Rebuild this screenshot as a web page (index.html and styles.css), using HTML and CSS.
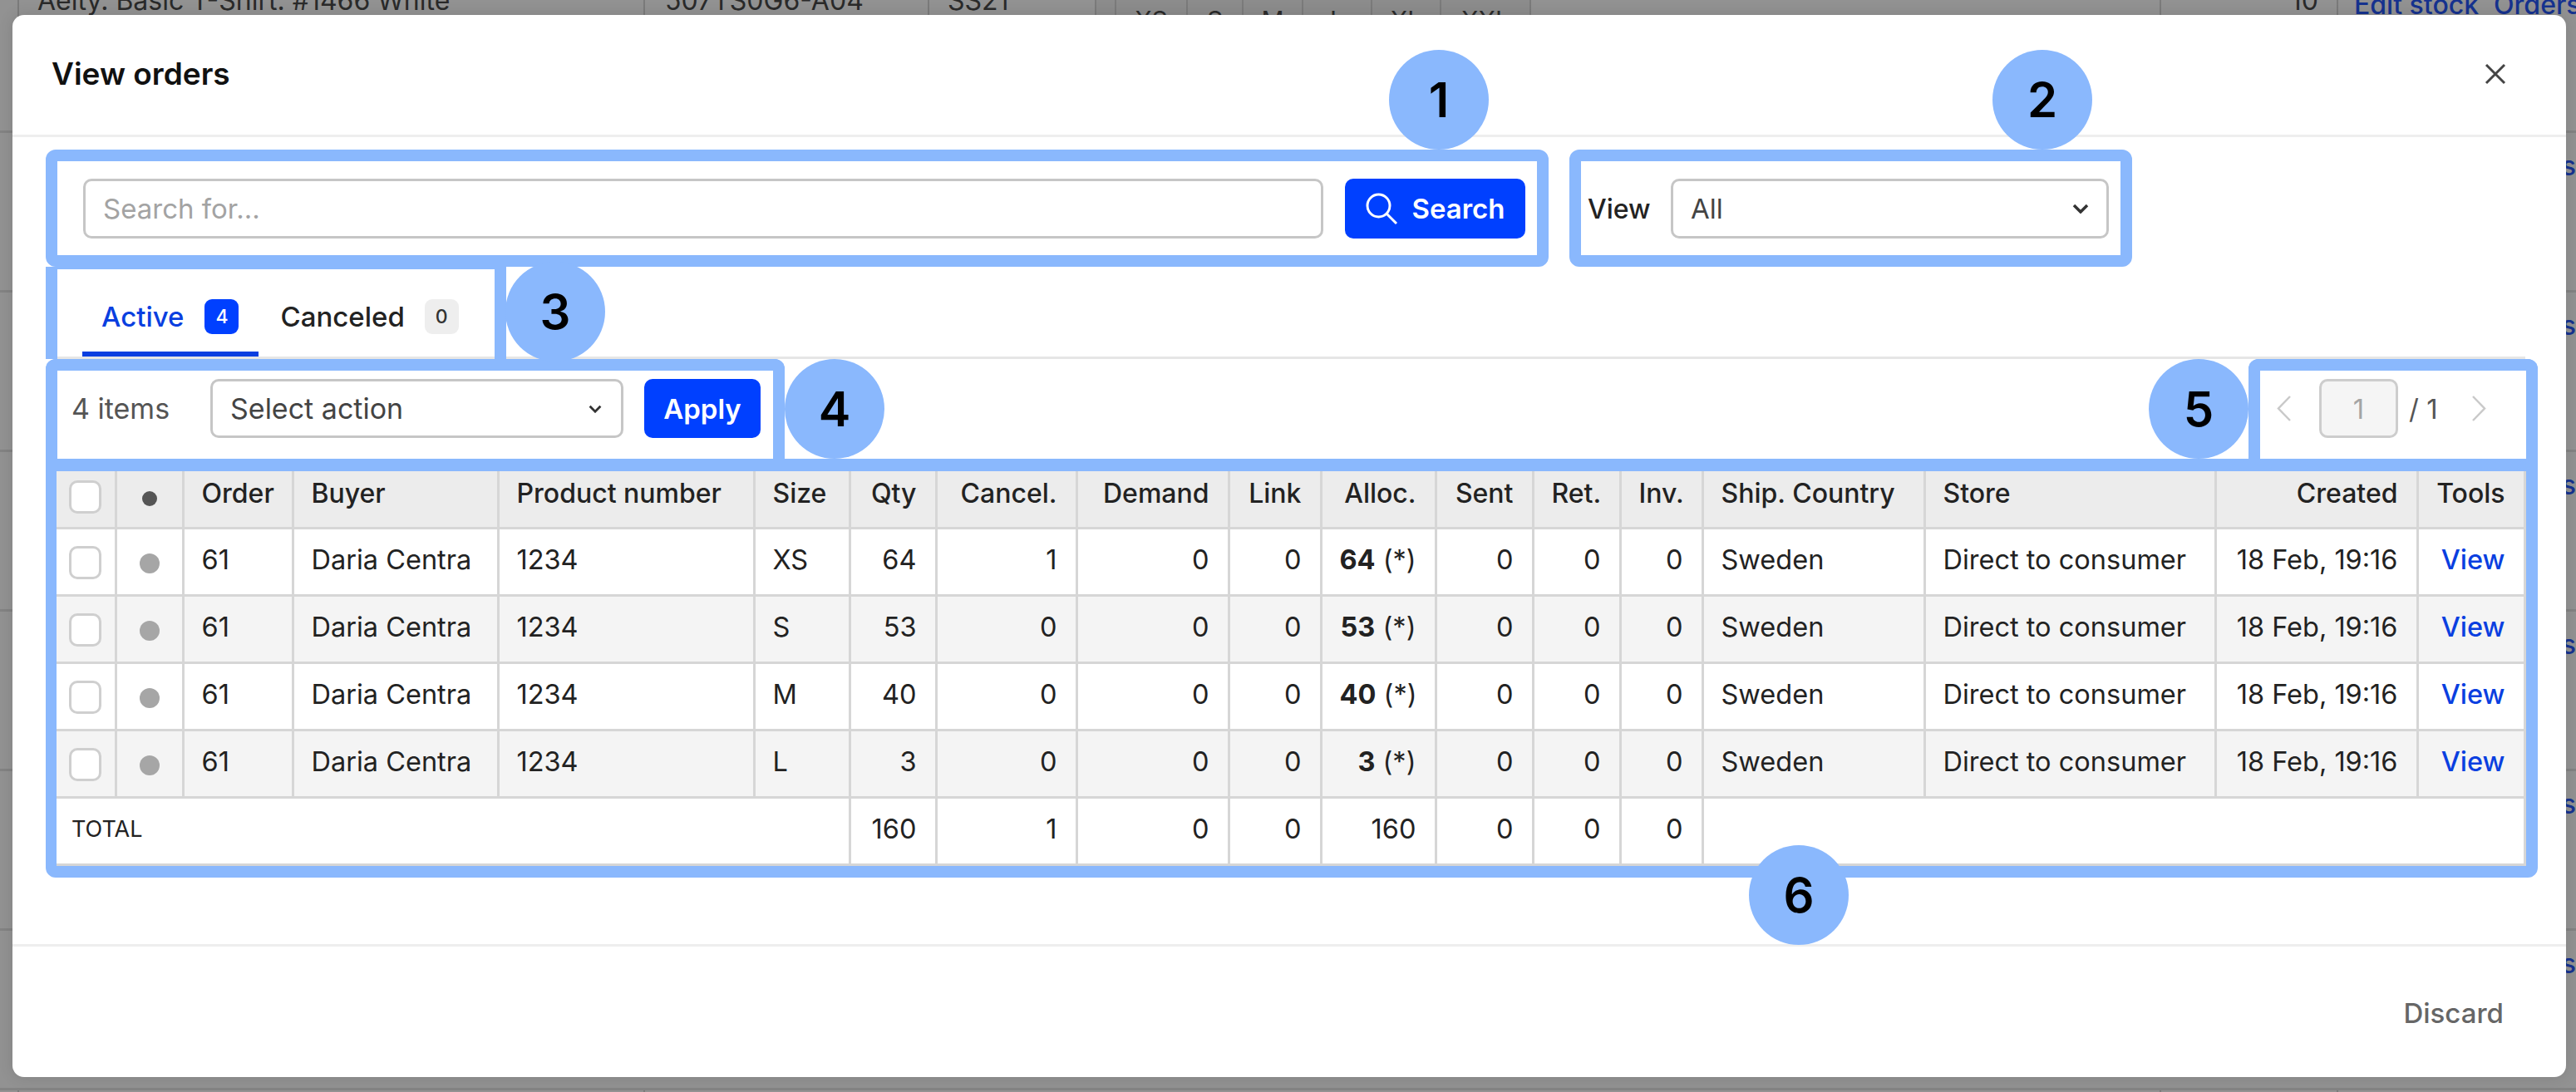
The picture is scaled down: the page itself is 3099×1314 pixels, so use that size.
FILE: index.html
```html
<!DOCTYPE html>
<html lang="en">
<head>
<meta charset="utf-8">
<title>View orders</title>
<link rel="stylesheet" href="styles.css">
</head>
<body>
<div class="page">
  <div class="backdrop">
    <div class="bg-row bg-first">
      <div class="bg-c bg-a"></div>
      <div class="bg-c bg-b"><span class="bg-text">Aeity. Basic T-Shirt. #1466 White</span></div>
      <div class="bg-c bg-sku"><span class="bg-text">507TS0G6-A04</span></div>
      <div class="bg-c bg-season"><span class="bg-text">SS21</span></div>
      <div class="bg-c bg-gap"></div>
      <div class="bg-c bg-s1"><span class="bg-text bg-size">XS</span></div>
      <div class="bg-c bg-s2"><span class="bg-text bg-size">S</span></div>
      <div class="bg-c bg-s3"><span class="bg-text bg-size">M</span></div>
      <div class="bg-c bg-s4"><span class="bg-text bg-size">L</span></div>
      <div class="bg-c bg-s5"><span class="bg-text bg-size">XL</span></div>
      <div class="bg-c bg-s6"><span class="bg-text bg-size">XXL</span></div>
      <div class="bg-c bg-e"></div>
      <div class="bg-c bg-stock"><span class="bg-text bg-stock-num">10</span></div>
      <div class="bg-c bg-tools"><span class="bg-link">Edit stock</span><span class="bg-link">Orders</span></div>
    </div>
    <div class="bg-row"><div class="bg-tail">s</div></div>
    <div class="bg-row"><div class="bg-tail">s</div></div>
    <div class="bg-row"><div class="bg-tail">s</div></div>
    <div class="bg-row"><div class="bg-tail">s</div></div>
    <div class="bg-row"><div class="bg-tail">s</div></div>
    <div class="bg-row"><div class="bg-tail">s</div></div>
    <div class="bg-row bg-last">
      <div class="bg-c bg-a"></div>
      <div class="bg-c bg-b"></div>
      <div class="bg-c bg-long"></div>
      <div class="bg-c bg-mid"></div>
    </div>
  </div>

  <div class="modal">
    <header class="modal-head">
      <h1 class="modal-title">View orders</h1>
      <button class="close" aria-label="Close">
        <svg class="close-icon" viewBox="0 0 26 26"><path d="M2 2 24 24M24 2 2 24"/></svg>
      </button>
    </header>

    <div class="modal-body">
      <div class="filter-row">
        <div class="ann search-box">
          <div class="field search-field">Search for...</div>
          <button class="btn search-btn">
            <svg class="search-icon" viewBox="0 0 40 40"><circle cx="16.500" cy="16.500" r="13.500"/><path d="M26.500 26.500 38 38"/></svg>
            <span>Search</span>
          </button>
        </div>
        <div class="ann view-box">
          <span class="view-label">View</span>
          <div class="field select view-select">
            <span class="select-value">All</span>
            <svg class="chev" viewBox="0 0 20 12"><path d="M2 2 10 10 18 2"/></svg>
          </div>
        </div>
      </div>

      <div class="tab-row">
        <div class="ann tabs">
          <div class="tab tab-active">
            <span>Active</span><span class="badge badge-blue">4</span>
          </div>
          <div class="tab tab-second">
            <span>Canceled</span><span class="badge badge-grey">0</span>
          </div>
        </div>
        <div class="tab-fill"></div>
      </div>

      <div class="tool-row">
        <div class="ann actions">
          <span class="count">4 items</span>
          <div class="field select action-select">
            <span class="action-value">Select action</span>
            <svg class="chev chev-small" viewBox="0 0 20 12"><path d="M2 2 10 10 18 2"/></svg>
          </div>
          <button class="btn apply-btn">Apply</button>
        </div>
        <div class="ann pager">
          <svg class="pg-arrow" viewBox="0 0 18 33"><path d="M16 2 2 16.500 16 31"/></svg>
          <div class="pg-input">1</div>
          <span class="pg-total">/ 1</span>
          <svg class="pg-arrow pg-next" viewBox="0 0 18 33"><path d="M2 2 16 16.500 2 31"/></svg>
        </div>
      </div>

      <div class="ann table-box">
        <table class="orders">
          <colgroup>
            <col class="w71"><col class="w81"><col class="w132"><col class="w247"><col class="w308"><col class="w115"><col class="w104"><col class="w169"><col class="w183"><col class="w111"><col class="w138"><col class="w117"><col class="w105"><col class="w99"><col class="w267"><col class="w350"><col class="w243"><col class="w129">
          </colgroup>
          <thead>
            <tr>
              <th class="ctr"><span class="check"></span></th>
              <th class="ctr"><span class="dot dot-head"></span></th>
              <th>Order</th><th>Buyer</th><th>Product number</th><th>Size</th>
              <th class="num">Qty</th><th class="num">Cancel.</th><th class="num">Demand</th><th class="num">Link</th><th class="num">Alloc.</th><th class="num">Sent</th><th class="num">Ret.</th><th class="num">Inv.</th>
              <th>Ship. Country</th><th>Store</th><th class="num">Created</th><th class="num">Tools</th>
            </tr>
          </thead>
          <tbody>
            <tr>
              <td class="ctr"><span class="check"></span></td><td class="ctr"><span class="dot"></span></td>
              <td>61</td><td>Daria Centra</td><td>1234</td><td>XS</td>
              <td class="num">64</td><td class="num">1</td><td class="num">0</td><td class="num">0</td><td class="num"><b>64</b> (*)</td><td class="num">0</td><td class="num">0</td><td class="num">0</td>
              <td>Sweden</td><td>Direct to consumer</td><td class="num">18 Feb, 19:16</td><td class="num"><a class="view-link">View</a></td>
            </tr>
            <tr>
              <td class="ctr"><span class="check"></span></td><td class="ctr"><span class="dot"></span></td>
              <td>61</td><td>Daria Centra</td><td>1234</td><td>S</td>
              <td class="num">53</td><td class="num">0</td><td class="num">0</td><td class="num">0</td><td class="num"><b>53</b> (*)</td><td class="num">0</td><td class="num">0</td><td class="num">0</td>
              <td>Sweden</td><td>Direct to consumer</td><td class="num">18 Feb, 19:16</td><td class="num"><a class="view-link">View</a></td>
            </tr>
            <tr>
              <td class="ctr"><span class="check"></span></td><td class="ctr"><span class="dot"></span></td>
              <td>61</td><td>Daria Centra</td><td>1234</td><td>M</td>
              <td class="num">40</td><td class="num">0</td><td class="num">0</td><td class="num">0</td><td class="num"><b>40</b> (*)</td><td class="num">0</td><td class="num">0</td><td class="num">0</td>
              <td>Sweden</td><td>Direct to consumer</td><td class="num">18 Feb, 19:16</td><td class="num"><a class="view-link">View</a></td>
            </tr>
            <tr>
              <td class="ctr"><span class="check"></span></td><td class="ctr"><span class="dot"></span></td>
              <td>61</td><td>Daria Centra</td><td>1234</td><td>L</td>
              <td class="num">3</td><td class="num">0</td><td class="num">0</td><td class="num">0</td><td class="num"><b>3</b> (*)</td><td class="num">0</td><td class="num">0</td><td class="num">0</td>
              <td>Sweden</td><td>Direct to consumer</td><td class="num">18 Feb, 19:16</td><td class="num"><a class="view-link">View</a></td>
            </tr>
          </tbody>
          <tfoot>
            <tr>
              <td colspan="6" class="total-label">TOTAL</td>
              <td class="num">160</td><td class="num">1</td><td class="num">0</td><td class="num">0</td><td class="num">160</td><td class="num">0</td><td class="num">0</td><td class="num">0</td>
              <td colspan="4"></td>
            </tr>
          </tfoot>
        </table>
      </div>
    </div>

    <footer class="modal-foot">
      <span class="discard">Discard</span>
    </footer>
  </div>

  <span class="marker m1">1</span>
  <span class="marker m2">2</span>
  <span class="marker m3">3</span>
  <span class="marker m4">4</span>
  <span class="marker m5">5</span>
  <span class="marker m6">6</span>
</div>
</body>
</html>
```
FILE: styles.css
```css
* { box-sizing: border-box; }
html, body { margin: 0; padding: 0; }
body { font-family: "Inter", "Liberation Sans", sans-serif; color: #222; font-size: 33px; }

.page { position: relative; width: 3099px; height: 1314px; overflow: hidden; background: #929292; }

/* dimmed page behind the dialog */
.backdrop { margin-top: -32px; }
.bg-row { display: flex; height: 192px; border-bottom: 3px solid #838383; position: relative; }
.bg-c { border-right: 2px solid #7b7b7b; height: 100%; flex: none; }
.bg-a { width: 23px; }
.bg-b { width: 753px; padding: 17px 0 0 22px; }
.bg-sku { width: 342px; padding: 17px 0 0 24px; }
.bg-season { width: 201px; padding: 17px 0 0 22px; }
.bg-gap { width: 24px; background: #8c8c8c; }
.bg-s1 { width: 86px; background: #8c8c8c; text-align: center; }
.bg-s2 { width: 67px; background: #8c8c8c; text-align: center; }
.bg-s3 { width: 72px; background: #8c8c8c; text-align: center; }
.bg-s4 { width: 83px; background: #8c8c8c; text-align: center; }
.bg-s5 { width: 83px; background: #8c8c8c; text-align: center; }
.bg-s6 { width: 108px; background: #8c8c8c; text-align: center; }
.bg-e { width: 758px; }
.bg-stock { width: 213px; text-align: right; padding: 17px 22px 0 0; }
.bg-tools { border-right: 0; width: 287px; padding: 17px 0 0 19px; white-space: nowrap; }
.bg-text { color: #2a2a2a; font-size: 32px; line-height: 1; display: block; }
.bg-size { padding-top: 41px; font-size: 30px; }
.bg-link { color: #16328f; font-size: 32px; font-weight: 500; line-height: 1; margin-right: 18px; }
.bg-tail { margin-left: auto; padding-top: 22px; color: #16328f; font-size: 32px; font-weight: 500; line-height: 1.1; }
.bg-last { border-bottom: 0; }
.bg-long { width: 1824px; }
.bg-mid { width: 213px; }

/* dialog */
.modal {
  position: absolute; left: 15px; top: 18px; width: 3072px; height: 1278px;
  background: #fff; border-radius: 14px; display: flex; flex-direction: column;
  box-shadow: 0 0 18px rgba(0, 0, 0, .12);
}
.modal-head { height: 147px; flex: none; display: flex; align-items: center; justify-content: space-between; padding: 0 72px 3px 47px; border-bottom: 3px solid #eee; }
.modal-title { margin: 0; font-size: 37px; font-weight: 600; color: #111; }
.close { border: 0; background: none; padding: 0; width: 26px; height: 26px; display: flex; }
.close-icon { width: 26px; height: 26px; fill: none; stroke: #444; stroke-width: 3; }

.modal-body { flex: 1; padding: 15px 34px 0 40px; }

.ann { border: 14px solid #8ab8fd; border-radius: 12px; background: #fff; }
.filter-row { display: flex; gap: 25px; height: 141px; }

.field { border: 3px solid #c6c6c6; border-radius: 10px; height: 72px; display: flex; align-items: center; background: #fff; }
.search-box { width: 1808px; display: flex; gap: 26px; align-items: center; padding: 1px 14px 0 31px; }
.search-field { flex: 1; padding-left: 21px; color: #a3a3a3; font-size: 33px; }
.btn { border: 0; border-radius: 10px; background: #0040ff; color: #fff; font-family: inherit; font-weight: 600; font-size: 33px; height: 72px; display: flex; align-items: center; justify-content: center; flex: none; padding: 0; }
.search-btn { width: 217px; gap: 16px; }
.search-icon { width: 40px; height: 40px; fill: none; stroke: #fff; stroke-width: 3; }

.view-box { width: 677px; display: flex; align-items: center; padding: 1px 14px 0 8px; }
.view-label { width: 100px; font-weight: 500; font-size: 32px; color: #222; flex: none; }
.select { justify-content: space-between; }
.view-select { flex: 1; padding: 0 21px; }
.select-value { color: #444; }
.chev { width: 20px; height: 12px; fill: none; stroke: #333; stroke-width: 3.500; flex: none; }
.chev-small { width: 16px; height: 10px; }

.tab-row { display: flex; height: 111px; }
.tabs { width: 554px; height: 111px; border-width: 3px 14px 0; border-radius: 0; display: flex; padding-left: 30px; box-shadow: inset 0 -3px 0 #e6e6e6; }
.tab { display: flex; align-items: center; height: 105px; gap: 25px; padding: 14px 24px 0 23px; font-weight: 500; color: #222; border-bottom: 6px solid transparent; }
.tab-second { padding-left: 26px; padding-right: 0; gap: 24px; }
.tab-active { color: #0a3fe0; border-bottom-color: #0a3fe0; }
.badge { width: 41px; height: 42px; border-radius: 9px; font-size: 23px; font-weight: 500; display: flex; align-items: center; justify-content: center; }
.badge-blue { background: #0040ff; color: #fff; }
.badge-grey { background: #eee; color: #333; }
.tab-fill { width: 2429px; height: 111px; border-bottom: 3px solid #e6e6e6; }

.tool-row { display: flex; justify-content: space-between; height: 120px; }
.actions { width: 889px; height: 120px; border-bottom: 0; border-radius: 12px 12px 0 0; display: flex; align-items: center; padding: 0 15px 15px 17px; }
.count { color: #555; width: 167px; flex: none; font-size: 34px; }
.action-select { width: 497px; flex: none; padding: 0 23px 0 21px; height: 71px; }
.action-value { color: #444; font-size: 34px; }
.apply-btn { width: 140px; margin-left: 25px; height: 71px; }

.pager { width: 348px; height: 120px; border-bottom: 0; border-radius: 12px 12px 0 0; display: flex; align-items: center; padding: 0 0 15px 20px; }
.pg-arrow { width: 18px; height: 33px; fill: none; stroke: #c9c9c9; stroke-width: 2.500; flex: none; }
.pg-input { width: 95px; height: 71px; margin-left: 33px; border: 3px solid #cdcdcd; border-radius: 10px; background: #f5f5f5; color: #a5a5a5; display: flex; align-items: center; justify-content: center; }
.pg-total { margin-left: 13px; color: #555; width: 36px; white-space: nowrap; }
.pg-next { margin-left: 39px; }

.table-box { width: 2998px; height: 504px; border-radius: 0 0 12px 12px; border-width: 15px 16px 15px 13px; }
.orders { border-collapse: collapse; table-layout: fixed; width: 2969px; font-size: 32.500px; }
.w71 { width: 71px; } .w81 { width: 81px; } .w132 { width: 132px; } .w247 { width: 247px; } .w308 { width: 308px; }
.w115 { width: 115px; } .w104 { width: 104px; } .w169 { width: 169px; } .w183 { width: 183px; } .w111 { width: 111px; }
.w138 { width: 138px; } .w117 { width: 117px; } .w105 { width: 105px; } .w99 { width: 99px; } .w267 { width: 267px; }
.w350 { width: 350px; } .w243 { width: 243px; } .w129 { width: 129px; }
.orders th, .orders td { border: 3px solid #d6d6d6; padding: 0 22px 4px 21px; text-align: left; white-space: nowrap; font-weight: 400; color: #222; }
.orders tr > :first-child { border-left: 0; }
.orders thead tr { height: 68px; }
.orders thead th { background: #ececec; border-top: 0; font-weight: 500; font-size: 32px; padding-bottom: 14px; }
.orders tbody tr, .orders tfoot tr { height: 81px; }
.orders tbody tr:nth-child(even) td { background: #f4f4f4; }
.orders .num { text-align: right; }
.orders .ctr { text-align: center; padding: 0; }
.orders thead .ctr { padding-bottom: 6px; }
.orders b { font-weight: 700; }
.check { display: inline-block; width: 39px; height: 40px; border: 3px solid #cfcfcf; border-radius: 10px; background: #fff; vertical-align: middle; }
.dot { display: inline-block; width: 24px; height: 24px; border-radius: 50%; background: #a6a6a6; vertical-align: middle; }
.dot-head { width: 18px; height: 18px; background: #555; }
.view-link { color: #0a3fe0; font-weight: 500; }
.orders .total-label { font-size: 27px; padding-left: 18px; }

.modal-foot { height: 160px; flex: none; border-top: 3px solid #eee; display: flex; justify-content: flex-end; padding: 62px 75px 0 0; }
.discard { color: #666; font-weight: 500; line-height: 36px; height: 36px; }

/* numbered callouts */
.marker { position: absolute; width: 120px; height: 120px; border-radius: 50%; background: #8ab8fd; color: #000; font-size: 58px; font-weight: 600; display: flex; align-items: center; justify-content: center; }
.m1 { left: 1671px; top: 60px; }
.m2 { left: 2397px; top: 60px; }
.m3 { left: 608px; top: 315px; }
.m4 { left: 944px; top: 432px; }
.m5 { left: 2585px; top: 432px; }
.m6 { left: 2104px; top: 1017px; }
```
